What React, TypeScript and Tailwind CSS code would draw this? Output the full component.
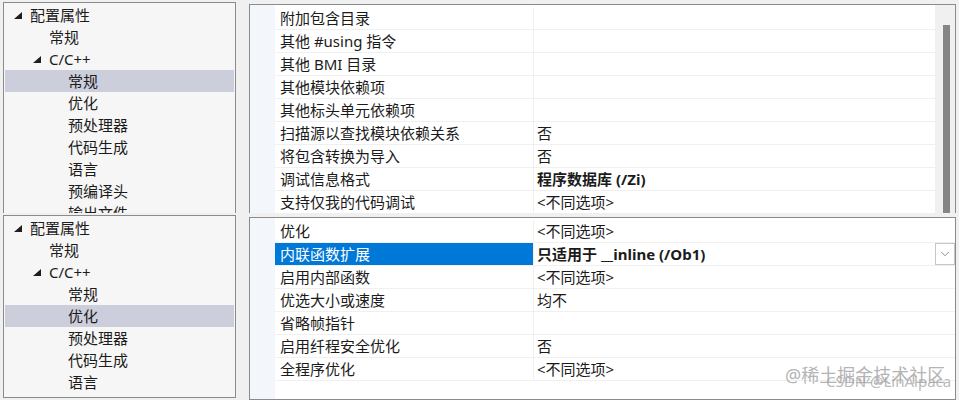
import { ChevronDown } from "lucide-react" // Chevron for the dropdown button in the selected property row

// One node of the left navigation tree
type TreeItem = {
  label: string // Text shown in the tree
  level: 0 | 1 | 2 // Indentation depth
  expanded?: boolean // Shows the expanded triangle in front of the label
  selected?: boolean // Gray selection bar
}

// One row of the property grid
type PropRow = {
  name: string // Property name
  value?: string // Property value, may be empty
  bold?: boolean // Values changed from the default are bold
  selected?: boolean // Blue highlighted row with a dropdown button
}

// Indentation per level, written out in full so Tailwind picks them up
const levelPad: Record<number, string> = {
  0: "pl-[9px]", // Root level
  1: "pl-[28px]", // First child level
  2: "pl-[47px]", // Second child level
}

const baseTree: TreeItem[] = [
  { label: "配置属性", level: 0, expanded: true },
  { label: "常规", level: 1 },
  { label: "C/C++", level: 1, expanded: true },
  { label: "常规", level: 2 },
  { label: "优化", level: 2 },
  { label: "预处理器", level: 2 },
  { label: "代码生成", level: 2 },
  { label: "语言", level: 2 },
  { label: "预编译头", level: 2 },
  { label: "输出文件", level: 2 },
]

// Top screenshot: C/C++ > 常规 selected
const topTree = baseTree.map((item, i) => ({ ...item, selected: i === 3 }))
// Bottom screenshot: C/C++ > 优化 selected, the capture stops after 语言
const bottomTree = baseTree.slice(0, 8).map((item, i) => ({ ...item, selected: i === 4 }))

const topRows: PropRow[] = [
  { name: "附加包含目录" },
  { name: "其他 #using 指令" },
  { name: "其他 BMI 目录" },
  { name: "其他模块依赖项" },
  { name: "其他标头单元依赖项" },
  { name: "扫描源以查找模块依赖关系", value: "否" },
  { name: "将包含转换为导入", value: "否" },
  { name: "调试信息格式", value: "程序数据库 (/Zi)", bold: true },
  { name: "支持仅我的代码调试", value: "<不同选项>" },
]

const bottomRows: PropRow[] = [
  { name: "优化", value: "<不同选项>" },
  { name: "内联函数扩展", value: "只适用于 __inline (/Ob1)", bold: true, selected: true },
  { name: "启用内部函数", value: "<不同选项>" },
  { name: "优选大小或速度", value: "均不" },
  { name: "省略帧指针" },
  { name: "启用纤程安全优化", value: "否" },
  { name: "全程序优化", value: "<不同选项>" },
]

// Small filled triangle used by Visual Studio for an expanded node
function Expander() {
  return (
    <span className="flex w-[16px] shrink-0 items-center">
      <svg width="8" height="7" viewBox="0 0 8 7" className="mt-[1px]">
        <polygon points="8,0 8,7 0,7" fill="#1e1e1e" />
      </svg>
    </span>
  )
}

function TreeRow({ item }: { item: TreeItem }) {
  return (
    <div
      className={`flex h-[22px] items-center ${levelPad[item.level]} ${item.selected ? "bg-[#cccedb]" : ""}`} // Row with level indent and optional selection bar
    >
      {item.expanded ? <Expander /> : <span className="w-[16px] shrink-0" />} {/* Triangle or spacer so labels line up */}
      <span className="whitespace-nowrap leading-[22px]">{item.label}</span>
    </div>
  )
}

function GridRow({ row }: { row: PropRow }) {
  return (
    <div className="flex h-[23px] border-b border-[#f0f0f0]">
      {/* Property name cell, blue when selected */}
      <div
        className={`flex w-[259px] shrink-0 items-center border-r border-[#f0f0f0] pl-[5px] whitespace-nowrap ${
          row.selected ? "bg-[#0078d7] text-white" : ""
        }`}
      >
        {row.name}
      </div>
      {/* Value cell */}
      <div className="flex min-w-0 flex-1 items-center pl-[3px]">
        <span className={`whitespace-nowrap ${row.bold ? "font-bold" : ""}`}>{row.value}</span>
        {row.selected && (
          <span className="ml-auto flex h-[22px] w-[20px] items-center justify-center border border-[#c6c6c6] bg-white">
            <ChevronDown className="h-[14px] w-[14px] text-[#6b6b6b]" strokeWidth={1.3} />
          </span>
        )}
      </div>
    </div>
  )
}

type PanelProps = {
  tree: TreeItem[]
  rows: PropRow[]
  height: string // Full class for the clipped screenshot height
  boxHeight: string // Full class for the tree/grid boxes
  scrollbar?: boolean // Only the top screenshot shows the vertical scrollbar
}

// One captured property page: tree on the left, property grid on the right
function Panel({ tree, rows, height, boxHeight, scrollbar }: PanelProps) {
  return (
    <div className={`flex shrink-0 overflow-hidden pl-[3px] pt-[2px] ${height}`}>
      {/* Navigation tree */}
      <div className={`w-[233px] shrink-0 overflow-hidden border border-[#8b8b8b] bg-[#f6f6f6] px-[1px] pt-[1px] ${boxHeight}`}>
        {tree.map((item, i) => (
          <TreeRow key={i} item={item} />
        ))}
      </div>

      {/* Property grid */}
      <div className={`ml-[13px] mt-[2px] flex w-[707px] shrink-0 border border-[#8b8b8b] bg-white ${boxHeight}`}>
        <div className="w-[25px] shrink-0 bg-[#f3f6fb]" /> {/* Category gutter */}
        <div className="flex-1 pt-[2px]">
          {rows.map((row, i) => (
            <GridRow key={i} row={row} />
          ))}
        </div>
        {scrollbar && (
          <div className="w-[20px] shrink-0 bg-[#f0f0f0] pl-[8px] pt-[20px]">
            <div className="h-full w-[7px] bg-[#858585]" /> {/* Scrollbar thumb */}
          </div>
        )}
      </div>
    </div>
  )
}

export default function App() {
  return (
    <div className="relative flex h-[400px] w-[959px] flex-col overflow-hidden bg-[#f0f0f0] font-['Noto_Sans','Noto_Sans_CJK_SC',sans-serif] text-[15px] text-[#1b1b1b]">
      <Panel tree={topTree} rows={topRows} height="h-[213px]" boxHeight="h-[260px]" scrollbar />
      <Panel tree={bottomTree} rows={bottomRows} height="h-[187px]" boxHeight="h-[183px]" />

      {/* Watermarks stamped over the bottom-right corner */}
      <div className="pointer-events-none absolute left-[785px] top-[364px] whitespace-nowrap text-[18px] leading-[22px] text-[#b4b4b4]">
        @稀土掘金技术社区
      </div>
      <div className="pointer-events-none absolute left-[826px] top-[371px] whitespace-nowrap text-[15px] leading-[20px] text-[#a8a8a8]/80">
        CSDN @LinAlpaca
      </div>
    </div>
  )
}
